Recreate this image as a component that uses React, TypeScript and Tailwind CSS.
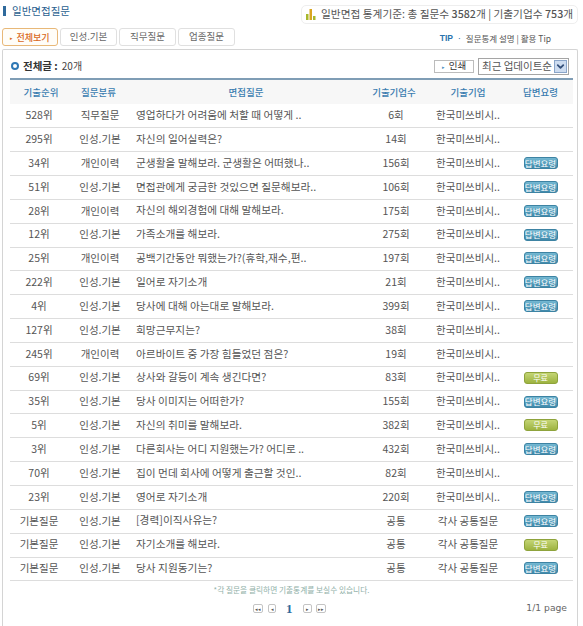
import { ChevronDown } from "lucide-react";

type Row = {
  rank: string;
  kind: string;
  question: string;
  count: string;
  company: string;
  badge?: "answer" | "free";
};

const rows: Row[] = [
  { rank: "528위", kind: "직무질문", question: "영업하다가 어려움에 처할 때 어떻게 ..", count: "6회", company: "한국미쓰비시.." },
  { rank: "295위", kind: "인성.기본", question: "자신의 일어실력은?", count: "14회", company: "한국미쓰비시.." },
  { rank: "34위", kind: "개인이력", question: "군생활을 말해보라. 군생활은 어떠했나..", count: "156회", company: "한국미쓰비시..", badge: "answer" },
  { rank: "51위", kind: "인성.기본", question: "면접관에게 궁금한 것있으면 질문해보라..", count: "106회", company: "한국미쓰비시..", badge: "answer" },
  { rank: "28위", kind: "개인이력", question: "자신의 해외경험에 대해 말해보라.", count: "175회", company: "한국미쓰비시..", badge: "answer" },
  { rank: "12위", kind: "인성.기본", question: "가족소개를 해보라.", count: "275회", company: "한국미쓰비시..", badge: "answer" },
  { rank: "25위", kind: "개인이력", question: "공백기간동안 뭐했는가?(휴학,재수,편..", count: "197회", company: "한국미쓰비시..", badge: "answer" },
  { rank: "222위", kind: "인성.기본", question: "일어로 자기소개", count: "21회", company: "한국미쓰비시..", badge: "answer" },
  { rank: "4위", kind: "인성.기본", question: "당사에 대해 아는대로 말해보라.", count: "399회", company: "한국미쓰비시..", badge: "answer" },
  { rank: "127위", kind: "인성.기본", question: "희망근무지는?", count: "38회", company: "한국미쓰비시.." },
  { rank: "245위", kind: "개인이력", question: "아르바이트 중 가장 힘들었던 점은?", count: "19회", company: "한국미쓰비시.." },
  { rank: "69위", kind: "인성.기본", question: "상사와 갈등이 계속 생긴다면?", count: "83회", company: "한국미쓰비시..", badge: "free" },
  { rank: "35위", kind: "인성.기본", question: "당사 이미지는 어떠한가?", count: "155회", company: "한국미쓰비시..", badge: "answer" },
  { rank: "5위", kind: "인성.기본", question: "자신의 취미를 말해보라.", count: "382회", company: "한국미쓰비시..", badge: "free" },
  { rank: "3위", kind: "인성.기본", question: "다른회사는 어디 지원했는가? 어디로 ..", count: "432회", company: "한국미쓰비시..", badge: "answer" },
  { rank: "70위", kind: "인성.기본", question: "집이 먼데 회사에 어떻게 출근할 것인..", count: "82회", company: "한국미쓰비시.." },
  { rank: "23위", kind: "인성.기본", question: "영어로 자기소개", count: "220회", company: "한국미쓰비시..", badge: "answer" },
  { rank: "기본질문", kind: "인성.기본", question: "[경력]이직사유는?", count: "공통", company: "각사 공통질문", badge: "answer" },
  { rank: "기본질문", kind: "인성.기본", question: "자기소개를 해보라.", count: "공통", company: "각사 공통질문", badge: "free" },
  { rank: "기본질문", kind: "인성.기본", question: "당사 지원동기는?", count: "공통", company: "각사 공통질문", badge: "answer" },
];

const tabs = ["인성.기본", "직무질문", "업종질문"];

function Badge({ type }: { type: "answer" | "free" }) {
  if (type === "free") {
    return (
      <span className="flex h-[12px] w-[34px] items-center justify-center rounded-[3px] border border-[#8ea33c] bg-gradient-to-b from-[#c4d574] to-[#9db33f] text-[8px] leading-none text-white">
        무료
      </span>
    );
  }
  return (
    <span className="flex h-[12px] w-[34px] items-center justify-center rounded-[3px] border border-[#3d83a3] bg-gradient-to-b from-[#74b8d2] to-[#3f8aab] text-[8.5px] leading-none whitespace-nowrap text-white">
      답변요령
    </span>
  );
}

function PageButton({ glyph, width }: { glyph: string; width: string }) {
  return (
    <span className={`flex h-[9px] items-center justify-center rounded-[2px] border border-[#c4c4c4] bg-white text-[5px] leading-none text-[#555] ${width}`}>
      {glyph}
    </span>
  );
}

export default function App() {
  return (
    <div className="h-[626px] w-[583px] overflow-hidden bg-white font-['Noto_Sans_CJK_KR','Liberation_Sans',sans-serif] text-[#555]">
      {/* Title + stats */}
      <div className="flex h-[28px] items-start justify-between pl-[3px]">
        <div className="mt-[4px] flex items-center gap-[6px]">
          <span className="h-[10px] w-[3px] bg-[#2f6a9c]" />
          <h1 className="text-[10.5px] leading-[14px] text-[#2a5f8f]">일반면접질문</h1>
        </div>
        <div className="mt-[5px] mr-[5px] flex h-[19px] w-[277px] items-center gap-[5px] rounded-[5px] border border-[#eeeeee] pl-[3px] text-[10.7px] leading-none text-[#555]">
          <svg width="10" height="11" viewBox="0 0 10 11" className="ml-[1px] shrink-0">
            <rect x="0" y="5" width="2.5" height="6" fill="#a8b82c" />
            <rect x="3.5" y="0" width="2.5" height="11" fill="#d9a520" />
            <rect x="7" y="7" width="2.5" height="4" fill="#a8b82c" />
          </svg>
          <span className="whitespace-nowrap">
            일반면접 통계기준: 총 질문수 <b className="font-medium">3582</b>개 | 기출기업수 <b className="font-medium">753</b>개
          </span>
        </div>
      </div>

      {/* Tabs */}
      <div className="flex h-[18px] items-center pl-[2px] pr-[32px]">
        <div className="flex gap-[2px]">
          <div className="flex h-[18px] w-[56px] items-center justify-center gap-[3px] rounded-[3px] border border-[#e8b878] bg-[#fffdf8] text-[9px] font-medium leading-none text-[#d9681c]">
            <span className="text-[5px]">▸</span>
            전체보기
          </div>
          {tabs.map((t) => (
            <div
              key={t}
              className="flex h-[18px] w-[57px] items-center justify-center rounded-[3px] border border-[#e0e0e0] bg-white text-[9.5px] leading-none text-[#666]"
            >
              {t}
            </div>
          ))}
        </div>
        <div className="ml-auto flex items-center gap-[4px] pt-[2px] text-[8.5px] leading-none text-[#555]">
          <span className="font-['Liberation_Sans',sans-serif] text-[8.5px] font-bold text-[#2a73ad]">TIP</span>
          <span className="text-[#2a73ad]">·</span>
          <span>질문통계 설명 | 활용 Tip</span>
        </div>
      </div>

      {/* Panel */}
      <div className="mt-[3px] ml-[2px] mr-[5px] h-[578px] rounded-t-[2px] border-x border-t border-[#d4d4d4] pl-[7px] pr-[3px]">
        <div className="flex h-[28px] items-center pt-[4px] pr-[5px]">
          <span className="ml-[1px] mr-[4px] h-[8px] w-[8px] rounded-full border-[2px] border-[#2f78b5] bg-white" />
          <span className="text-[10.5px] font-bold leading-none text-[#333]">전체글 :</span>
          <span className="ml-[4px] text-[10px] leading-none text-[#444]">20개</span>
          <div className="ml-auto flex items-center gap-[4px]">
            <button className="flex h-[13px] w-[40px] items-center justify-center gap-[4px] border border-[#bcbcbc] bg-white text-[9.5px] leading-none text-[#333]">
              <span className="text-[5px] text-[#4a8ec2]">▸</span>
              인쇄
            </button>
            <div className="flex h-[17px] w-[91px] items-center border border-[#a5a5a5] bg-white pl-[3px] pr-[1px] text-[10.5px] leading-none text-[#555]">
              <span className="whitespace-nowrap">최근 업데이트순</span>
              <span className="ml-auto flex h-[13px] w-[13px] items-center justify-center border border-[#8aa5c9] bg-[#cddcf0]">
                <ChevronDown size={11} strokeWidth={4} className="text-[#34507a]" />
              </span>
            </div>
          </div>
        </div>

        <table className="w-[563px] table-fixed border-collapse">
          <thead>
            <tr className="h-[25px] border-t-2 border-[#7f9db5] bg-[#f7f7f7] text-[9.5px] font-medium text-[#3a7cb0]">
              <th className="w-[58px] pl-[4px] font-medium">기출순위</th>
              <th className="w-[64px] pr-[3px] font-medium">질문분류</th>
              <th className="w-[228px] font-medium">면접질문</th>
              <th className="w-[72px] pr-[4px] font-medium">기출기업수</th>
              <th className="w-[76px] pr-[4px] font-medium">기출기업</th>
              <th className="w-[65px] font-medium">답변요령</th>
            </tr>
          </thead>
          <tbody>
            {rows.map((r, i) => (
              <tr key={i} className="h-[23.85px] border-b border-[#dddddd] text-[10.5px] leading-none text-[#555] [&>td]:pb-[1px]">
                <td className="text-center">{r.rank}</td>
                <td className="text-center">{r.kind}</td>
                <td className="truncate pl-[4px] text-left text-[10.7px]">{r.question}</td>
                <td className="text-center">{r.count}</td>
                <td className="pr-[4px] text-center whitespace-nowrap">{r.company}</td>
                <td>
                  {r.badge && (
                    <div className="flex justify-center">
                      <Badge type={r.badge} />
                    </div>
                  )}
                </td>
              </tr>
            ))}
          </tbody>
        </table>

        <p className="mt-[4px] w-[563px] text-center text-[7.7px] leading-[10px] text-[#8fb0a8]">
          *각 질문을 클릭하면 기출통계를 보실수 있습니다.
        </p>

        <div className="relative mt-[6px] flex h-[14px] w-[563px] items-center justify-start pl-[243px]">
          <div className="flex items-center">
            <PageButton glyph="◂◂" width="w-[10px]" />
            <span className="w-[5px]" />
            <PageButton glyph="◂" width="w-[8px]" />
            <span className="w-[10px]" />
            <span className="font-['Liberation_Serif',serif] text-[13px] font-bold leading-none text-[#2f6a9c]">1</span>
            <span className="w-[10px]" />
            <PageButton glyph="▸" width="w-[9px]" />
            <span className="w-[4px]" />
            <PageButton glyph="▸▸" width="w-[10px]" />
          </div>
          <span className="absolute right-[6px] top-[2px] font-['DejaVu_Sans',sans-serif] text-[9.2px] leading-none text-[#666]">
            1/1 page
          </span>
        </div>
      </div>
    </div>
  );
}
